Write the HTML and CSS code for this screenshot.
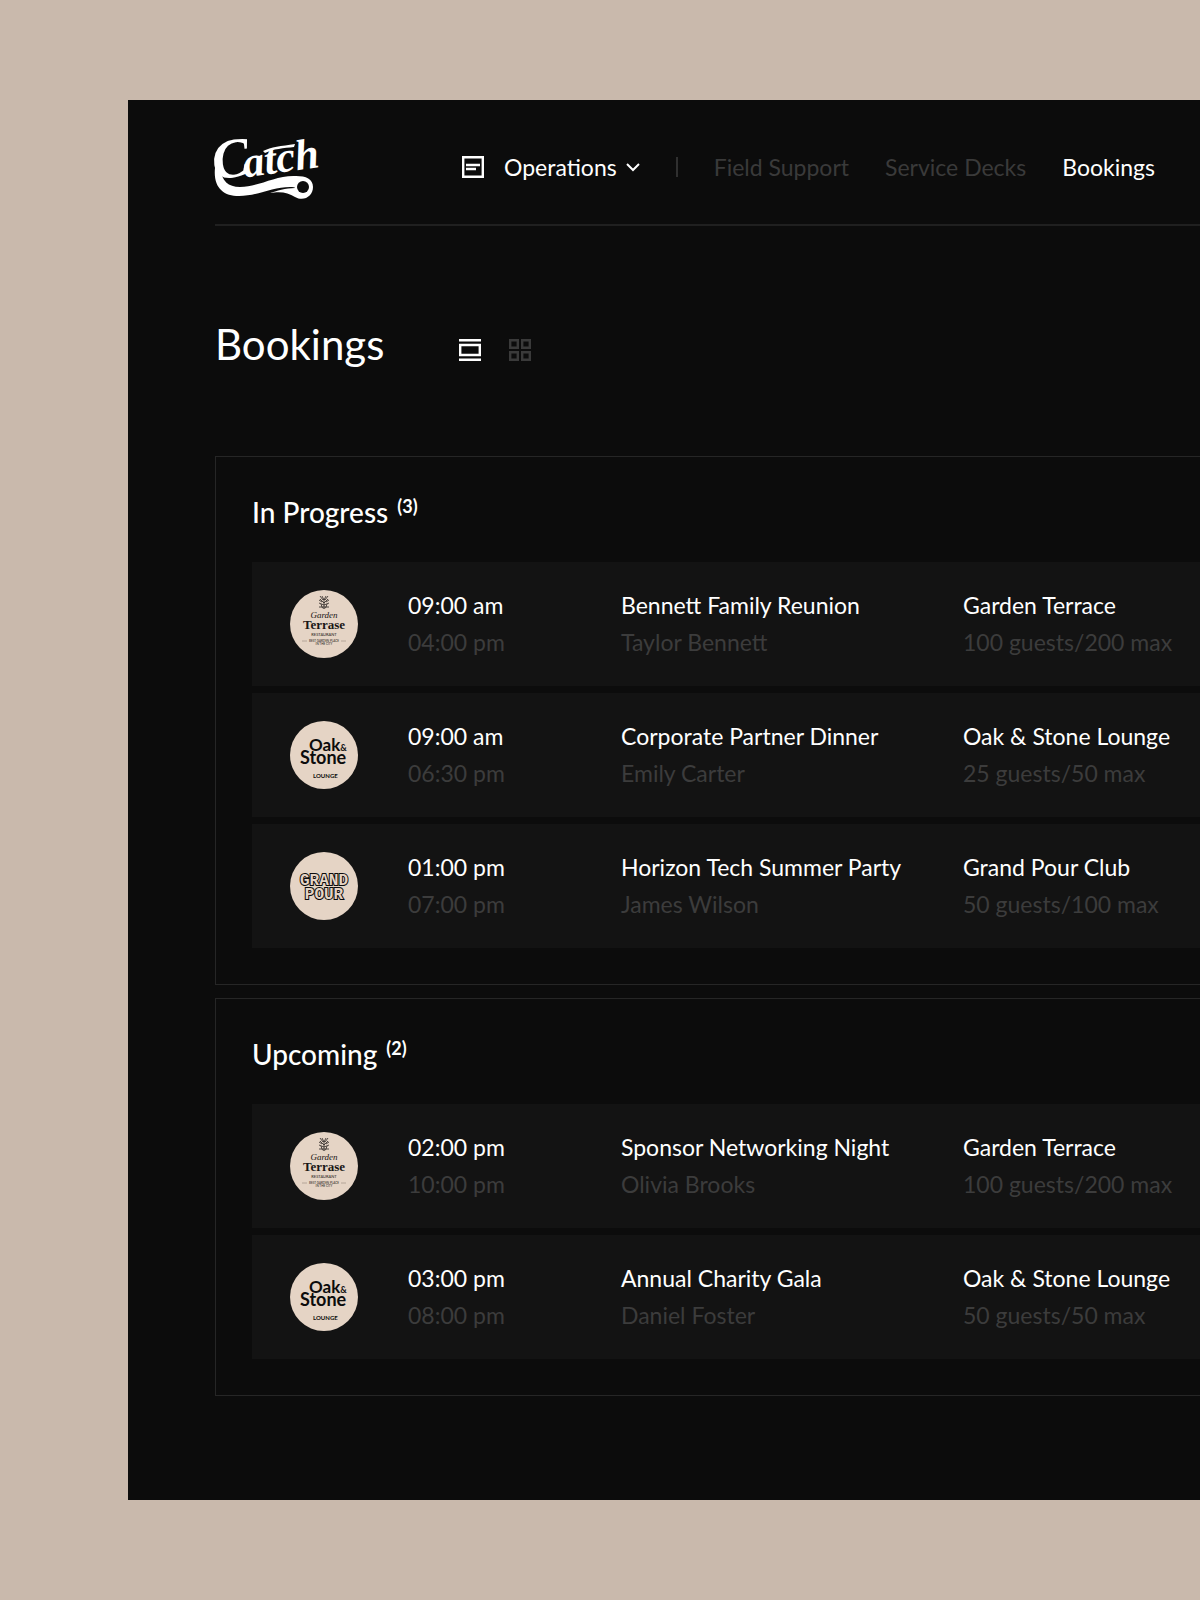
FILE: index.html
```html
<!DOCTYPE html>
<html lang="en">

<head>
    <meta charset="UTF-8">
    <meta name="viewport" content="width=device-width, initial-scale=1.0">
    <title>Catch - Bookings</title>
    <link rel="stylesheet" href="styles.css">
</head>

<body>
    <!-- venue logos, used by the rows below -->
    <svg class="defs" aria-hidden="true">
        <symbol id="garden" viewBox="0 0 68 68">
            <circle cx="34" cy="34" r="34" fill="#e5d4c5"/>
            <g fill="none" stroke="#2a2522" stroke-width=".8">
                <path d="M34 18V9M34 13l-4-4M34 13l4-4M34 10l-2-4M34 10l2-4M34 15l-5-2M34 15l5-2M29 10l3 2M39 10l-3 2M30 6l3 4M38 6l-3 4M29 17h10M31 14l1 3c1 2 3 2 4 0l1-3"/>
                <path d="M12 51h5M51 51h5" stroke="#a89a8d"/>
            </g>
            <g fill="#1a1715" text-anchor="middle">
                <text class="script" x="34" y="28" font-size="9">Garden</text>
                <text class="serif" x="34" y="39" font-size="13">Terrase</text>
                <text class="sans" x="34" y="46" font-size="4">RESTAURANT</text>
                <text class="sans" x="34" y="52" font-size="3">BEST GARDEN PLACE</text>
                <text class="sans" x="34" y="55" font-size="3">IN THE CITY</text>
            </g>
        </symbol>
        <symbol id="oak" viewBox="0 0 68 68">
            <circle cx="34" cy="34" r="34" fill="#e5d4c5"/>
            <g class="round" fill="#0c0c0c">
                <text x="19" y="30" font-size="17">Oak<tspan font-size="9">&amp;</tspan></text>
                <text x="10" y="43" font-size="18">Stone</text>
                <text x="23" y="57" font-size="6">LOUNGE</text>
            </g>
        </symbol>
        <symbol id="grand" viewBox="0 0 68 68">
            <circle cx="34" cy="34" r="34" fill="#e5d4c5"/>
            <g class="block" font-size="16" text-anchor="middle">
                <text x="34" y="33">GRAND</text>
                <text x="34" y="47">POUR</text>
            </g>
        </symbol>
    </svg>

    <div class="panel">
        <header class="header">
            <a href="#" class="brand" aria-label="Catch">
                <svg width="108" height="66" viewBox="0 0 108 66" fill="#fff">
                    <text class="brand-text" transform="rotate(-8 40 40)" x="-1" y="40" font-size="56">C<tspan dx="-7" dy="2" font-size="43">atch</tspan></text>
                    <path d="M48 17C56 13 66 12 80 10l-1 3C69 14 58 15 50 19z"/>
                    <path d="M0 34C-2 53 8 62 24 62c18 0 34-9 51-9 3 0 5 0 5 1-9 0-19 3-25 5 12-2 18 0 25 4 9 5 18-1 18-10 0-8-7-11-17-11-21-1-37 11-56 11C13 53 7 47 5 34 4 28 1 28 0 34z"/>
                    <circle cx="88" cy="53" r="6" fill="#0c0c0c"/>
                </svg>
            </a>
            <nav class="nav">
                <button type="button" class="nav-menu">
                    <svg width="22" height="22" viewBox="0 0 22 22" fill="none" stroke="#fff" stroke-width="2.4">
                        <path d="M1.2 1.2h19.6v19.6H1.2zM4 9h14M4 13h10"/>
                    </svg>
                    <span>Operations</span>
                    <svg width="14" height="9" viewBox="0 0 14 9" fill="none" stroke="#fff" stroke-width="2">
                        <path d="M1 1l6 6 6-6"/>
                    </svg>
                </button>
                <span class="nav-line"></span>
                <a href="#">Field Support</a>
                <a href="#">Service Decks</a>
                <a href="#" class="active">Bookings</a>
            </nav>
        </header>

        <main>
            <div class="title-bar">
                <h1>Bookings</h1>
                <div class="views">
                    <button type="button" aria-label="List view">
                        <svg width="22" height="22" viewBox="0 0 22 22" fill="none" stroke="#fff" stroke-width="2.4">
                            <path d="M0 1.2h22M0 20.8h22M1.2 6h19.6v10H1.2z"/>
                        </svg>
                    </button>
                    <button type="button" aria-label="Grid view">
                        <svg width="22" height="22" viewBox="0 0 22 22" fill="none" stroke="#3a3a3a" stroke-width="2.4">
                            <path d="M1.2 1.2h7.6v7.6H1.2zM13.2 1.2h7.6v7.6h-7.6zM1.2 13.2h7.6v7.6H1.2zM13.2 13.2h7.6v7.6h-7.6z"/>
                        </svg>
                    </button>
                </div>
            </div>

            <section class="group">
                <h2>In Progress <sup>(3)</sup></h2>
                <table>
                    <tr>
                        <td class="logo"><svg width="68" height="68"><use href="#garden"/></svg></td>
                        <td class="time">09:00 am<span>04:00 pm</span></td>
                        <td class="event">Bennett Family Reunion<span>Taylor Bennett</span></td>
                        <td>Garden Terrace<span>100 guests/200 max</span></td>
                    </tr>
                    <tr>
                        <td class="logo"><svg width="68" height="68"><use href="#oak"/></svg></td>
                        <td class="time">09:00 am<span>06:30 pm</span></td>
                        <td class="event">Corporate Partner Dinner<span>Emily Carter</span></td>
                        <td>Oak &amp; Stone Lounge<span>25 guests/50 max</span></td>
                    </tr>
                    <tr>
                        <td class="logo"><svg width="68" height="68"><use href="#grand"/></svg></td>
                        <td class="time">01:00 pm<span>07:00 pm</span></td>
                        <td class="event">Horizon Tech Summer Party<span>James Wilson</span></td>
                        <td>Grand Pour Club<span>50 guests/100 max</span></td>
                    </tr>
                </table>
            </section>

            <section class="group">
                <h2>Upcoming <sup>(2)</sup></h2>
                <table>
                    <tr>
                        <td class="logo"><svg width="68" height="68"><use href="#garden"/></svg></td>
                        <td class="time">02:00 pm<span>10:00 pm</span></td>
                        <td class="event">Sponsor Networking Night<span>Olivia Brooks</span></td>
                        <td>Garden Terrace<span>100 guests/200 max</span></td>
                    </tr>
                    <tr>
                        <td class="logo"><svg width="68" height="68"><use href="#oak"/></svg></td>
                        <td class="time">03:00 pm<span>08:00 pm</span></td>
                        <td class="event">Annual Charity Gala<span>Daniel Foster</span></td>
                        <td>Oak &amp; Stone Lounge<span>50 guests/50 max</span></td>
                    </tr>
                </table>
            </section>
        </main>
    </div>
</body>

</html>
```
FILE: styles.css
```css
* {
    box-sizing: border-box;
}

body {
    margin: 0;
    padding: 100px 0 100px 128px;
    background-color: #c9b9ac;
    color: #fff;
    font-family: Lato, sans-serif;
    font-size: 23px;
    line-height: 37px;
}

svg {
    display: block;
    overflow: visible;
}

.defs {
    display: none;
}

.panel {
    background-color: #0c0c0c;
    padding: 0 0 104px 87px;
}

button {
    display: flex;
    align-items: center;
    padding: 0;
    border: 0;
    background: none;
    color: inherit;
    font: inherit;
    cursor: pointer;
}

.header {
    display: flex;
    align-items: center;
    height: 126px;
    padding-top: 10px;
    border-bottom: 2px solid #202020;
}

.brand {
    width: 247px;
}

.nav {
    display: flex;
    align-items: center;
    gap: 36px;
    white-space: nowrap;
}

.nav a {
    color: #3a3a3a;
    text-decoration: none;
}

.nav a.active {
    color: #fff;
}

.nav-menu span {
    margin: 0 9px 0 20px;
}

.nav-line {
    width: 2px;
    height: 20px;
    background-color: #303030;
}

.title-bar {
    display: flex;
    align-items: center;
    gap: 75px;
    padding: 89px 0 83px;
}

h1 {
    margin: 0;
    font-size: 42px;
    font-weight: 400;
    line-height: 58px;
}

.views {
    display: flex;
    gap: 28px;
    padding-top: 12px;
}

.group {
    margin-bottom: 13px;
    padding: 35px 0 29px 36px;
    border: 1px solid #262626;
    border-right: 0;
}

.group:last-child {
    margin-bottom: 0;
}

h2 {
    margin: 0 0 23px;
    font-size: 28px;
    font-weight: 500;
    line-height: 40px;
}

sup {
    margin-left: 2px;
    font-size: 18px;
    font-weight: 700;
    line-height: 0;
}

table {
    width: 100%;
    border-spacing: 0 7px;
}

td {
    height: 124px;
    padding: 0;
    background-color: #131313;
    white-space: nowrap;
}

td span {
    display: block;
    color: #3c3c3c;
}

.logo {
    width: 156px;
    padding-left: 38px;
}

.time {
    width: 213px;
}

.event {
    width: 342px;
}

/* lettering inside the logos */
.brand-text {
    font-family: "Liberation Serif", serif;
    font-style: italic;
    font-weight: 700;
}

.script {
    font-family: "Liberation Serif", serif;
    font-style: italic;
}

.serif {
    font-family: "Liberation Serif", serif;
    font-weight: 700;
}

.sans {
    font-family: Lato, sans-serif;
}

.round {
    font-family: Lato, sans-serif;
    font-weight: 700;
}

.block {
    font-family: "Liberation Mono", monospace;
    font-weight: 700;
    fill: #e5d4c5;
    stroke: #0c0c0c;
    stroke-width: 2px;
    paint-order: stroke;
}
```
